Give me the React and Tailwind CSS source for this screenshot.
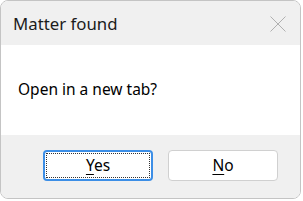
import React from 'react';

const font = { fontFamily: '"Segoe UI", "Noto Sans", "Open Sans", sans-serif' };

const CloseIcon = () => (
  <svg width="16" height="16" viewBox="0 0 16 16" className="block">
    <path d="M0.5 0.5 L15.5 15.5 M15.5 0.5 L0.5 15.5" stroke="#b0b0b0" strokeWidth="1" fill="none" />
  </svg>
);

export default function App() {
  return (
    <div className="w-[303px] h-[201px] bg-white" style={font}>
      <div className="w-[301px] h-[199px] border border-[#c4c4c4] rounded-[8px] overflow-hidden flex flex-col text-[#1b1b1b]">
        {/* Title bar */}
        <div className="h-[44px] bg-[#f0f0f0] flex items-center justify-between pl-[12px] pr-[14px] pt-[2px] shrink-0">
          <span className="text-[16.8px] leading-none">Matter found</span>
          <CloseIcon />
        </div>

        {/* Message */}
        <div className="h-[90px] bg-white pl-[17px] pt-[34px] shrink-0">
          <p className="text-[15.5px] leading-[20px] text-[#000000]">Open in a new tab?</p>
        </div>

        {/* Buttons */}
        <div className="flex-1 bg-[#f0f0f0] flex gap-[15px] pl-[42px] pt-[15px]">
          <button className="w-[110px] h-[31px] rounded-[4px] border-2 border-[#3c8ee6] bg-white p-[1px]">
            <div className="w-full h-full border border-dotted border-[#333] flex items-center justify-center text-[15.5px] text-black">
              <span><span className="underline underline-offset-[3px]">Y</span>es</span>
            </div>
          </button>
          <button className="w-[110px] h-[31px] rounded-[4px] border border-[#d0d0d0] bg-white flex items-center justify-center text-[15.5px] text-black">
            <span><span className="underline underline-offset-[3px]">N</span>o</span>
          </button>
        </div>
      </div>
    </div>
  );
}
